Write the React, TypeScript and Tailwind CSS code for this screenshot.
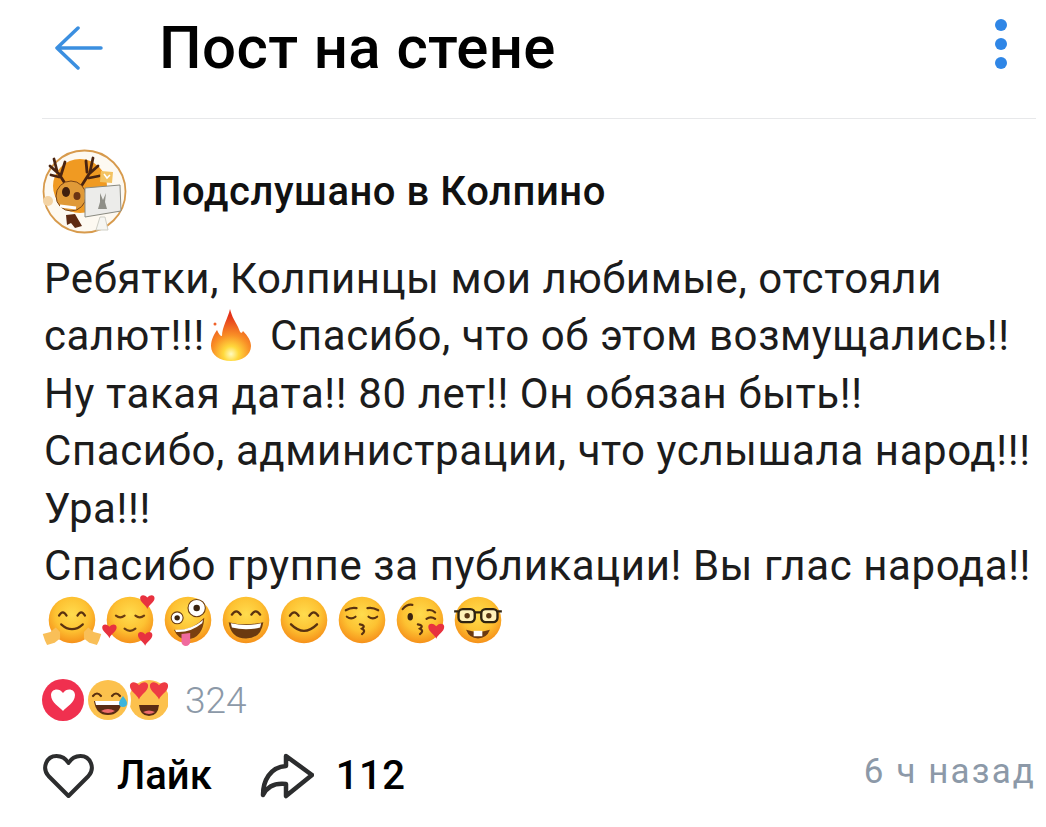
const lines1 = 'Ребятки, Колпинцы мои любимые, отстояли';

function Face({ children, id = 'f' }: { children?: React.ReactNode; id?: string }) {
    return (
        <svg viewBox="0 0 48 48" className="w-[52px] h-[52px] overflow-visible">
            <defs>
                <radialGradient id={id} cx="50%" cy="38%" r="60%">
                    <stop offset="0%" stopColor="#ffdc4e" />
                    <stop offset="60%" stopColor="#fdc232" />
                    <stop offset="100%" stopColor="#f6941c" />
                </radialGradient>
            </defs>
            <circle cx="24" cy="24" r="21.5" fill={`url(#${id})`} />
            {children}
        </svg>
    );
}

function Heart({ x, y, s = 1, fill = '#e8313f' }: { x: number; y: number; s?: number; fill?: string }) {
    return (
        <path
            transform={`translate(${x} ${y}) scale(${s})`}
            d="M0 5C-1.5 1-7-1-7-5.5C-7-8.500-3-9.500 0-6C3-9.500 7-8.500 7-5.500C7-1 1.500 1 0 5Z"
            fill={fill}
        />
    );
}

function EmojiRow() {
    return (
        <div className="flex gap-[6px]">
            <Face id="e1">
                <path d="M12 20q3.500-6 7 0M29 20q3.500-6 7 0" stroke="#5a3210" strokeWidth="2" fill="none" strokeLinecap="round" />
                <path d="M14 28q10 9 20 0" stroke="#5a3210" strokeWidth="2" fill="none" strokeLinecap="round" />
                <path d="M-3 37l7-2 5-4 4 4v6l-5 4-7 2-2-4zM51 37l-7-2-5-4-4 4v6l5 4 7 2 2-4z" fill="#f9bf58" />
            </Face>
            <Face id="e2">
                <path d="M11 20q4 3 8 0M29 20q4 3 8 0" stroke="#6b3d12" strokeWidth="2" fill="none" strokeLinecap="round" />
                <path d="M19 32q5 4 10 0" stroke="#6b3d12" strokeWidth="2" fill="none" strokeLinecap="round" />
                <Heart x={40} y={9} s={0.95} />
                <Heart x={5} y={36} s={0.95} />
                <Heart x={38} y={43} s={0.95} />
            </Face>
            <Face id="e3">
                <circle cx="14" cy="22" r="5.500" fill="#fff" stroke="#6b3d12" strokeWidth="1" />
                <circle cx="14" cy="22" r="2.500" fill="#3a2410" />
                <circle cx="32" cy="13" r="8" fill="#fff" stroke="#6b3d12" strokeWidth="1" />
                <circle cx="32" cy="13" r="3" fill="#3a2410" />
                <path d="M11 33q16 2 28-11q-1 19-16 20q-8 0-12-9Z" fill="#7a3f10" />
                <path d="M12 33q14 1 26-9l-1 3q-11 9-24 8Z" fill="#fff" />
                <path d="M18 37l8-1v8a4 4 0 0 1-8 0Z" fill="#f06a9e" />
            </Face>
            <Face id="e4">
                <path d="M11 19q4-6 8 0M29 19q4-6 8 0" stroke="#5a3210" strokeWidth="2.200" fill="none" strokeLinecap="round" />
                <path d="M8 26q16 4 32 0q-2 15-16 15T8 26Z" fill="#6b3a10" />
                <path d="M10 27q14 3 28 0l-1 4q-13 3-26 0Z" fill="#fff" />
            </Face>
            <Face id="e5">
                <path d="M11 20q4-6 8 0M29 20q4-6 8 0" stroke="#5a3210" strokeWidth="2.200" fill="none" strokeLinecap="round" />
                <path d="M12 28q12 12 24 0" stroke="#5a3210" strokeWidth="2.200" fill="none" strokeLinecap="round" />
            </Face>
            <Face id="e6">
                <path d="M9 15q5-3 10-2M29 13q5-1 10 2M10 21q4 3 8 0M30 21q4 3 8 0" stroke="#5a3210" strokeWidth="2" fill="none" strokeLinecap="round" />
                <path d="M22 28q6 1 2 4q4 2 0 5" stroke="#5a3210" strokeWidth="2" fill="none" strokeLinecap="round" />
            </Face>
            <Face id="e7">
                <path d="M8 14q4-5 9-4M31 15q4-1 7 2M30 23q4-3 8 0" stroke="#5a3210" strokeWidth="2" fill="none" strokeLinecap="round" />
                <ellipse cx="15" cy="21" rx="2.500" ry="3.500" fill="#3a2410" />
                <path d="M22 28q6 1 2 4q4 2 0 5" stroke="#5a3210" strokeWidth="2" fill="none" strokeLinecap="round" />
                <Heart x={39} y={36} s={1.050} />
            </Face>
            <Face id="e8">
                <g fill="#fff1b8" stroke="#2f2310" strokeWidth="2.200">
                    <rect x="6" y="14" width="15" height="12" rx="4" />
                    <rect x="27" y="14" width="15" height="12" rx="4" />
                </g>
                <path d="M21 17h6M2 16h4M42 16h4" stroke="#2f2310" strokeWidth="2.200" />
                <circle cx="14" cy="20" r="2.500" fill="#5a3512" />
                <circle cx="34" cy="20" r="2.500" fill="#5a3512" />
                <path d="M13 33q11 4 22 0q-3 8-11 8T13 33Z" fill="#6b3a10" />
                <rect x="20" y="34" width="8" height="5" fill="#fff" />
            </Face>
        </div>
    );
}

function Fire() {
    return (
        <svg viewBox="0 0 40 52" className="inline-block w-[40px] h-[52px] align-[-11px] ml-[6px] mr-[8px]">
            <defs>
                <radialGradient id="fire" gradientUnits="userSpaceOnUse" cx="20" cy="45" r="38">
                    <stop offset="0%" stopColor="#fffbc0" />
                    <stop offset="20%" stopColor="#ffd93c" />
                    <stop offset="50%" stopColor="#f98f26" />
                    <stop offset="100%" stopColor="#e4341a" />
                </radialGradient>
            </defs>
            <path d="M19 0C21 8 24 12 27 18C29 23 30 26 32 22C37 27 40 32 40 37C40 46 31 52 20 52C9 52 0 46 0 37C0 30 4 24 6 21C8 25 9 27 11 27C11 18 17 9 19 0Z" fill="url(#fire)" />
            <circle cx="4" cy="15" r="1.500" fill="#f0622a" />
        </svg>
    );
}

function Avatar() {
    return (
        <svg viewBox="0 0 85 85" className="w-[85px] h-[85px] shrink-0">
            <circle cx="42.500" cy="42.500" r="41" fill="#fdf9f1" stroke="#d79a4c" strokeWidth="1.800" />
            <circle cx="38" cy="37" r="27" fill="#f09a22" />
            <circle cx="6" cy="52" r="5" fill="#f3d3a4" />
            <path d="M8 17l9 8 7 11M12 10l3 12M23 13l-4 13M9 26l8 2M56 17l-9 8-7 11M51 9l-3 14M44 12l1 11M57 27l-10 2" stroke="#4a2410" strokeWidth="2.800" fill="none" strokeLinecap="round" />
            <ellipse cx="29" cy="47" rx="15" ry="15" fill="#e09a38" stroke="#7a4314" strokeWidth="1" />
            <ellipse cx="24" cy="43" rx="4" ry="5" fill="#3f1f0e" />
            <ellipse cx="35" cy="47" rx="3.500" ry="4" fill="#6b3413" />
            <path d="M18 57l16 2" stroke="#fff" strokeWidth="3" />
            <path d="M24 66l9-1 7 12-7 2-4-5-4 2Z" fill="#5e2a12" />
            <path d="M59 22l12 1-1 11-12-1Z" fill="#f3c362" />
            <path d="M62 25l3 4 3-3" fill="none" stroke="#fff" strokeWidth="1.500" />
            <path d="M43 39l35-3 1 26-36 6Z" fill="#ececea" stroke="#8a8a80" strokeWidth="1" />
            <path d="M58 44l3 7 3-7-1 9 2 7h-9l2-7Z" fill="#8f8f88" />
            <path d="M58 68h5l3 13H54Z" fill="#f6f6f2" stroke="#cfcfc6" strokeWidth="1" />
        </svg>
    );
}

function Reactions() {
    return (
        <svg viewBox="0 0 126 42" className="w-[126px] h-[42px] shrink-0">
            {/* third face sits under a white ring of the second */}
            <circle cx="107" cy="21" r="20" fill="#fcc14d" />
            <path d="M97 26h20q-1 11-10 11T97 26Z" fill="#5a2c14" />
            <path d="M101 33q6-3 12 0q-6 4-12 0Z" fill="#ef6a6a" />
            <Heart x={97} y={14} s={1.300} fill="#ee3b44" />
            <Heart x={117} y={14} s={1.300} fill="#ee3b44" />
            <circle cx="65" cy="21" r="24" fill="#fff" />
            <circle cx="66" cy="21" r="20" fill="#fcc14d" />
            <path d="M51 17q4-5 8 0M70 17q4-5 8 0" stroke="#5a3010" strokeWidth="2.200" fill="none" strokeLinecap="round" />
            <path d="M52 22h28q-2 14-14 14T52 22Z" fill="#5a2c14" />
            <path d="M53 22h26l-1 4H54Z" fill="#fff" />
            <path d="M59 32q7-4 14 0q-7 4-14 0Z" fill="#ef6a6a" />
            <path d="M81 17q-4 5-4 7a4 4 0 0 0 8 0q0-2-4-7Z" fill="#3cb4dc" />
            <circle cx="21" cy="21" r="24" fill="#fff" />
            <circle cx="21" cy="21" r="21" fill="#f0304f" />
            <path d="M21 32C18 28 9 24 9 16c0-6 8-8 12-2 4-6 12-4 12 2 0 8-9 12-12 16Z" fill="#fff" />
        </svg>
    );
}

export default function App() {
    return (
        <div className="w-[1046px] h-[827px] bg-white text-black overflow-hidden font-['Roboto',sans-serif]">
            <header className="h-[119px] ml-[42px] mr-[10px] flex items-start border-b border-[#e7e8ea]">
                <svg viewBox="0 0 50 44" className="w-[50px] h-[44px] mt-[26px] ml-[12px]" fill="none" stroke="#3b8fe0" strokeWidth="3.500" strokeLinecap="round" strokeLinejoin="round">
                    <path d="M47 22H3M24 2 3 22l21 20" />
                </svg>
                <h1 className="ml-[55px] mt-[14px] text-[60px] leading-[68px] tracking-[0.4px] font-medium">Пост на стене</h1>
                <div className="ml-auto mr-[29px] mt-[19px] flex flex-col gap-[7px]">
                    <span className="w-[12px] h-[12px] rounded-full bg-[#2f86e6]" />
                    <span className="w-[12px] h-[12px] rounded-full bg-[#2f86e6]" />
                    <span className="w-[12px] h-[12px] rounded-full bg-[#2f86e6]" />
                </div>
            </header>

            <main className="pl-[42px] pr-[10px]">
                <div className="flex items-center mt-[30px]">
                    <Avatar />
                    <span className="ml-[26px] text-[40px] leading-[44px] tracking-[0.55px] font-medium text-[#111]">Подслушано в Колпино</span>
                </div>

                <div className="mt-[16px] pl-[2px] text-[42px] leading-[57.4px] tracking-[0.6px] text-[#1c1c1c] whitespace-nowrap">
                    <div>{lines1}</div>
                    <div className="h-[57.4px]">салют!!!<Fire /> Спасибо, что об этом возмущались!!</div>
                    <div>Ну такая дата!! 80 лет!! Он обязан быть!!</div>
                    <div>Спасибо, администрации, что услышала народ!!!</div>
                    <div>Ура!!!</div>
                    <div>Спасибо группе за публикации! Вы глас народа!!</div>
                </div>

                <div className="pl-[4px]">
                    <EmojiRow />
                </div>

                <div className="flex items-center mt-[32px] h-[44px]">
                    <Reactions />
                    <span className="ml-[17px] text-[37px] text-[#8c99a8] font-light">324</span>
                </div>

                <div className="flex items-center mt-[24px]">
                    <svg viewBox="0 0 52 46" className="w-[53px] h-[46px]" fill="none" stroke="#2c2d2e" strokeWidth="4" strokeLinejoin="round">
                        <path d="M26 43 6 23C-1 15 4 3 14 3c5 0 9 2 12 7 3-5 7-7 12-7 10 0 15 12 8 20Z" />
                    </svg>
                    <span className="ml-[22px] text-[40px] leading-[46px] font-medium">Лайк</span>
                    <svg viewBox="0 0 54 46" className="ml-[48px] w-[54px] h-[46px]" fill="none" stroke="#2c2d2e" strokeWidth="4.500" strokeLinejoin="round" strokeLinecap="round">
                        <path d="M26 3 52 22 26 43V31C17 30 8 32 3 42 3 28 10 14 26 13Z" />
                    </svg>
                    <span className="ml-[22px] text-[40px] leading-[46px] tracking-[0.5px] font-medium">112</span>
                    <span className="ml-auto mb-[6px] text-[35px] tracking-[2.1px] text-[#8c99a8]">6 ч назад</span>
                </div>
            </main>
        </div>
    );
}
